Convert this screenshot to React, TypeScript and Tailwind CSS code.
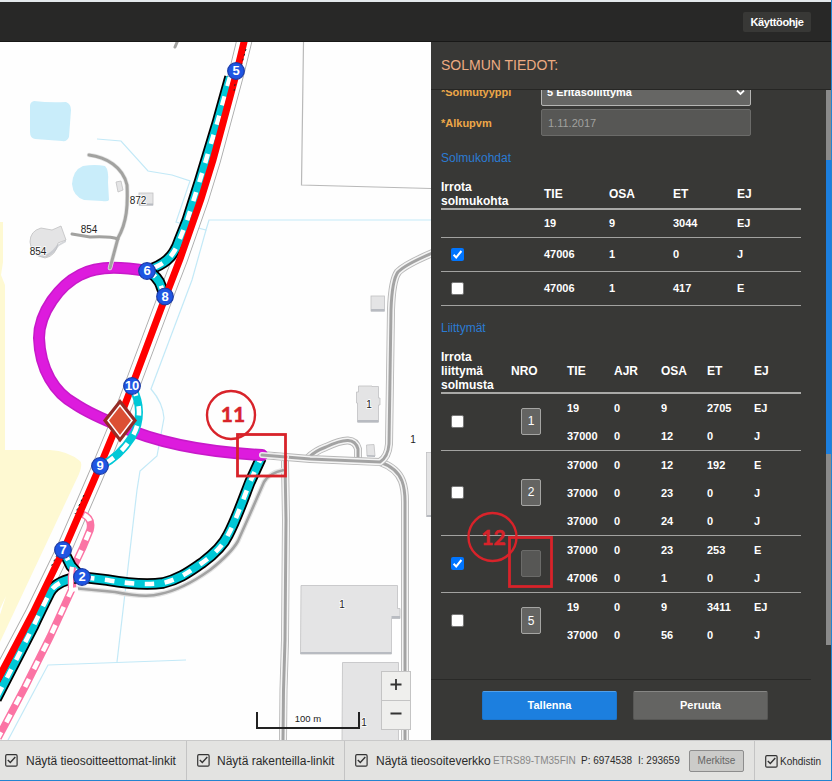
import React from 'react';

const SANS = "font-['Liberation_Sans',Arial,sans-serif]";

function Check({ checked }: { checked?: boolean }) {
  return (
    <span
      className={`block h-[13px] w-[13px] rounded-[2px] ${checked ? 'bg-[#0075ff]' : 'border border-[#767676] bg-white'}`}
    >
      {checked && (
        <svg viewBox="0 0 13 13" className="h-[13px] w-[13px]">
          <path d="M2.6 6.8 5.2 9.4 10.4 3" fill="none" stroke="#fff" strokeWidth="2" />
        </svg>
      )}
    </span>
  );
}

function FooterCheck() {
  return (
    <svg viewBox="0 0 13 13" className="h-[13px] w-[13px] shrink-0">
      <rect x="0.7" y="0.7" width="11.4" height="11.4" rx="1.2" fill="none" stroke="#333" strokeWidth="1.2" />
      <path d="M2.8 6 5.3 8.5 10.3 3" fill="none" stroke="#333" strokeWidth="1.4" />
    </svg>
  );
}

const RED =
  'M244.500 40 L237 71 L223 123 L213 160 L201 199 L180 259 L165 298 L132 386 L119 420 L100 466 L94 480 L65 547 L33 613 L-3 681';
const RAMP_NORTH = 'M230 77 L217.500 122 L200 180 L187 221 L179 241 Q175 253 167 260 Q160 266 148 270';
const RAMP_6_8 = 'M148 271 Q158 277 161 286 L165 297';
const RAMP_10_9 = 'M132 386 Q139 400 139 412 Q139 426 132 437 Q120 456 101 466';
const RAMP_EAST =
  'M81 577 L107 580 C130 584 148 585 163 583 C180 579 190 571 202 563 C214 554 223 546 228 535 C236 520 243 500 250 482 L261 458';
const RAMP_SOUTH = 'M81 577 Q57 580 50 592 C46 600 40 612 33 627 L-4 699';
const RAMP_7 = 'M63 550 L71 566 L81 577';
const MAGENTA =
  'M147 271 C128 268 100 264 80 275 C60 285 39 312 39 338 C40 370 55 393 75 404 C90 414 105 420 120 426 C155 442 205 452 262 455';
const PINK = 'M82 514 Q93 518 90 530 L83 547 L75 564 L72 589 L50 637 L25 687 L-2 738';
const MAIN_ROAD =
  'M262 455 L310 459 L380 462 Q388 457 389 444 L391 310 Q392 280 398 272 Q406 264 435 252';
const SOUTH_ROAD = 'M380 462 Q397 468 402 481 Q405 489 405 502 L405 740';
const LOOP = 'M308 458 Q315 451 326 447 C345 438 355 438 358 449 L358 461';
const MID_ROAD = 'M285 461 L286 520 L285 640 Q283 690 283 740';
const SIDE_ROAD =
  'M73 588 L115 592 C135 596 150 597 160 594 C180 590 196 580 210 570 C224 559 233 550 238 541 L250 514 L264 482 Q269 473 284 470';

function CasedRoad({ d }: { d: string }) {
  return (
    <g fill="none">
      <path d={d} stroke="#b8b8b8" strokeWidth="8" />
      <path d={d} stroke="#f4f4f4" strokeWidth="6.2" />
      <path d={d} stroke="#a3a3a3" strokeWidth="3" />
    </g>
  );
}

function Ramp({ d, outline = true, offset = 0 }: { d: string; outline?: boolean; offset?: number }) {
  return (
    <g fill="none">
      {outline && <path d={d} stroke="#000" strokeWidth="11.5" />}
      <path d={d} stroke="#00c8d7" strokeWidth="8" />
      <path d={d} stroke="#fff" strokeWidth="4.6" strokeDasharray="9.5 10.5" strokeDashoffset={offset} />
    </g>
  );
}

const MARKERS: [number, number, string][] = [
  [236, 71, '5'],
  [147, 271, '6'],
  [165, 296.5, '8'],
  [132, 386, '10'],
  [100, 466, '9'],
  [63, 550, '7'],
  [82, 577, '2'],
];

const LABELS: [number, number, string][] = [
  [138, 204, '872'],
  [89, 233, '854'],
  [38, 255, '854'],
  [369, 408, '1'],
  [413, 443, '1'],
  [342, 608, '1'],
  [364, 726, '1'],
];

function MapView() {
  return (
    <svg viewBox="0 42 431 698" className={`block h-[698px] w-[431px] shrink-0 bg-[#fefefe] ${SANS}`}>
      <path d="M0 222 H3 V262 L1 275 L5 285 V450 H50 Q68 451 80 461 Q83 464 79 474 L0 642Z" fill="#fef9d2" />
      <path d="M6 596 L0 609 V620 L-1 618Z" fill="#fff" />
      <path d="M34 101 Q50 103 66 102 Q71 104 71 110 L69 137 Q67 142 62 141 L35 139 Q30 138 30 132 L30 106 Q30 102 34 101Z" fill="#c9edfa" />
      <path d="M83 166 Q95 164 105 166 Q109 170 108 182 L109 200 Q108 202 102 201 L84 200 Q73 196 72 184 Q73 170 83 166Z" fill="#c9edfa" />
      <g fill="none" stroke="#c3e9f7" strokeWidth="1.2">
        <path d="M97 139 L121 141 L148 171 L172 175 L190 181 L176 222 L206 230 L209 220 H431" />
        <path d="M206 230 L192 280 L151 389 Q163 403 164 418 L157 456 L140 471 L137 490 L117 662" />
        <path d="M186 660 L48 665 L7 742" />
      </g>
      <path d="M303.500 42 L301.500 185 L431 188.500" fill="none" stroke="#b9b9b9" strokeWidth="1.2" />

      <g fill="#e4e4e5" stroke="#c0c0c2" strokeWidth="0.8">
        <path d="M30 242 Q30 231 41 228 L52 230 L61 226 L66 240 L58 243 Q56 256 45 258 Q31 255 30 242Z" />
        <path d="M116 182 L121 181 L123 190 L118 192Z" />
        <rect x="139" y="193" width="14" height="12" />
        <rect x="371" y="296" width="13.500" height="15" />
        <path d="M358.500 386 H372 V386.500 H378.500 V398 H380 V405 H378.500 V422 H357.500 V403 H356.500 V392 H358.500Z" />
        <path d="M366.500 445 L374 444.500 L375 456 H367Z" />
        <path d="M301 585.500 H397.500 V608.500 H400 V618.500 H391.500 V654 H300.500Z" />
        <path d="M342.500 662.500 H398.500 V741 H342Z" />
        <rect x="426.500" y="452.500" width="6" height="64" />
      </g>
      <g fill="#b8bbc1">
        <path d="M300.500 652 H391.500 V654 H300.500Z M391.500 616 H400 V618.500 H391.500Z M371 309 H384.500 V311.500 H371Z M357.500 420 H378.500 V422.500 H357.500Z M427 515 H431 V517 H427Z M367 455 L375 455.500 V457 L367 456.500Z M139 203.500 H153 V205.500 H139Z" />
        <path d="M34 253 Q45 261 57 245 L66 240 V242 L59 246 Q47 264 34 254Z" opacity="0.6" />
      </g>

      <CasedRoad d={SOUTH_ROAD} />
      <CasedRoad d={MID_ROAD} />
      <CasedRoad d={LOOP} />
      <CasedRoad d={MAIN_ROAD} />
      <g fill="none">
        <path d={SIDE_ROAD} stroke="#e4e4e4" strokeWidth="5" />
        <path d={SIDE_ROAD} stroke="#a3a3a3" strokeWidth="2.600" />
        <path d={RED} stroke="#ababab" strokeWidth="16" />
        <path d={RED} stroke="#fff" strokeWidth="14.200" />
      </g>

      <g fill="none">
        <path d={PINK} stroke="#fb74a4" strokeWidth="7.500" />
        <path d={PINK} stroke="#fff" strokeWidth="4.600" strokeDasharray="9 11" strokeDashoffset="-2" />
      </g>

      <Ramp d={RAMP_NORTH} />
      <Ramp d={RAMP_6_8} />
      <Ramp d={RAMP_EAST} offset={-4} />
      <Ramp d={RAMP_SOUTH} offset={-2} />
      <Ramp d={RAMP_7} offset={-2} />
      <path d="M73 567 L71 577 L71 588" fill="none" stroke="#fb74a4" strokeWidth="6.500" />
      <path d="M72 567 L71 577 L71 590 L78 589" fill="none" stroke="#fff" strokeWidth="4" />
      <g fill="none" strokeLinecap="round">
        <path d={MAGENTA} stroke="#c71ac9" strokeWidth="12" />
        <path d={MAGENTA} stroke="#dd1bdd" strokeWidth="9" />
      </g>
      <path d={RED} fill="none" stroke="#ff0000" strokeWidth="7" />
      <path d="M246 49 L240 70 M235 84 L234 92 M84 495 L75 514 M57 555 L51 567" fill="none" stroke="#222" strokeWidth="1" strokeDasharray="2 3" />
      <Ramp d={RAMP_10_9} outline={false} offset={-1} />

      <g fill="none" strokeLinecap="round">
        <path d="M89 155 C106 157 123 167 127 185 C128 205 127 222 118 238 L110 268" stroke="#e5e5e5" strokeWidth="4.500" />
        <path d="M89 155 C106 157 123 167 127 185 C128 205 127 222 118 238 L110 268" stroke="#a2a2a0" strokeWidth="3" />
        <path d="M72 234 L90 237 Q110 236 118 239" stroke="#a2a2a0" strokeWidth="3" />
        <path d="M178 40 L175 47" stroke="#a2a2a0" strokeWidth="3" />
        <path d="M262 455 L286 457" stroke="#ececec" strokeWidth="6" />
        <path d="M262 455 L286 457" stroke="#a3a3a3" strokeWidth="3" />
      </g>

      <path d="M120 401.500 L135 420.500 L120 440 L105 420.500Z" fill="#fff" stroke="#962c26" strokeWidth="3.200" />
      <path d="M120 406.500 L131 420.500 L120 435 L109 420.500Z" fill="#dc5034" />

      {MARKERS.map(([x, y, n]) => (
        <g key={n}>
          <circle cx={x} cy={y} r="8.300" fill="#1f56e3" stroke="#1b3ba8" strokeWidth="1.200" />
          <text x={x} y={y + 4.300} textAnchor="middle" fill="#fff" className="text-[13px] font-bold tracking-[-0.3px]">
            {n}
          </text>
        </g>
      ))}

      {LABELS.map(([x, y, s]) => (
        <text key={`${x}-${y}`} x={x} y={y} textAnchor="middle" fill="#222" stroke="#fff" strokeWidth="1.500" paintOrder="stroke" className="text-[10px]">
          {s}
        </text>
      ))}

      <g fill="#efefed" stroke="#c4c4c4">
        <rect x="381.500" y="671.500" width="29" height="29" />
        <rect x="381.500" y="700.500" width="29" height="29" />
      </g>
      <path d="M390.500 684.500 H401.500 M396 679 V690 M390.500 713.500 H401.500" stroke="#333" strokeWidth="1.800" />
      <path d="M257 712 V728 H359 V712" fill="none" stroke="#222" strokeWidth="2" />
      <text x="308" y="722" textAnchor="middle" fill="#222" className="text-[9.500px]">
        100 m
      </text>
    </svg>
  );
}

const NODE_POINTS = [
  { state: 'none', cells: ['19', '9', '3044', 'EJ'], h: 'h-[28px]' },
  { state: 'on', cells: ['47006', '1', '0', 'J'], h: 'h-[34px]' },
  { state: 'off', cells: ['47006', '1', '417', 'E'], h: 'h-[34px]' },
];

const JUNCTIONS = [
  { on: false, nro: '1', h: 'h-[57px]', rows: [['19', '0', '9', '2705', 'EJ'], ['37000', '0', '12', '0', 'J']] },
  {
    on: false,
    nro: '2',
    h: 'h-[85px]',
    rows: [['37000', '0', '12', '192', 'E'], ['37000', '0', '23', '0', 'J'], ['37000', '0', '24', '0', 'J']],
  },
  { on: true, nro: '', h: 'h-[57px]', rows: [['37000', '0', '23', '253', 'E'], ['47006', '0', '1', '0', 'J']] },
  { on: false, nro: '5', h: 'h-[57px]', rows: [['19', '0', '9', '3411', 'EJ'], ['37000', '0', '56', '0', 'J']] },
];

const GRID_POINTS = 'grid grid-cols-[103px_65px_64px_64px_1fr]';
const GRID_JUNCTION = 'grid grid-cols-[47px_47px_46px_47px_1fr]';

function Panel() {
  return (
    <aside className="flex w-[400px] flex-col bg-[#383836] text-white">
      <h1 className="flex h-[48px] shrink-0 items-center border-b border-[#262624] pl-[10px] text-[14px] text-[#ecab82]">
        SOLMUN TIEDOT:
      </h1>
      <div className="flex h-[590px] shrink-0 justify-between overflow-hidden">
        <div className="w-[360px] pl-[10px] box-content">
          <div className="flex h-[16px] items-end overflow-hidden">
            <span className="h-[21px] w-[100px] text-[11px] font-bold leading-[14px] text-[#eda748]">*Solmutyyppi</span>
            <div className="flex h-[27px] w-[210px] items-start justify-between rounded-[2px] border border-[#b5b5b3] bg-[#666664] pl-[5px] pr-[5px] pt-[5px] text-[11px] font-bold leading-[14px]">
              <span>5 Eritasoliittymä</span>
              <svg viewBox="0 0 8 8" className="mt-[4px] h-[8px] w-[9px]">
                <path d="M0.500 1.500 4 5 7.500 1.500" fill="none" stroke="#fff" strokeWidth="1.800" />
              </svg>
            </div>
          </div>
          <div className="mt-[3px] flex h-[27px] items-center">
            <span className="w-[100px] pt-[2px] text-[11px] font-bold text-[#eda748]">*Alkupvm</span>
            <div className="flex h-[27px] w-[210px] items-center rounded-[2px] border border-[#6b6b69] bg-[#575755] pl-[6px] pt-px text-[11px] text-[#a1a19f]">
              1.11.2017
            </div>
          </div>
          <h2 className="mt-[14px] text-[12px] leading-[16px] text-[#2b7bd3]">Solmukohdat</h2>
          <div className={`${GRID_POINTS} mt-[14px] h-[30px] items-center border-b-2 border-[#a9a9a7] text-[12px] font-bold`}>
            <span className="leading-[14px]">
              Irrota
              <br />
              solmukohta
            </span>
            <span>TIE</span>
            <span>OSA</span>
            <span>ET</span>
            <span>EJ</span>
          </div>
          {NODE_POINTS.map((row, i) => (
            <div key={i} className={`${GRID_POINTS} ${row.h} items-center border-b border-[#a2a2a0] text-[11px] font-bold`}>
              <span className="pl-[10px]">{row.state !== 'none' && <Check checked={row.state === 'on'} />}</span>
              {row.cells.map((c, j) => (
                <span key={j}>{c}</span>
              ))}
            </div>
          ))}
          <h2 className="mt-[14px] text-[12px] leading-[16px] text-[#2b7bd3]">Liittymät</h2>
          <div className="mt-[14px] flex h-[44px] items-center border-b-2 border-[#a9a9a7] text-[12px] font-bold">
            <span className="w-[70px] leading-[14px]">
              Irrota
              <br />
              liittymä
              <br />
              solmusta
            </span>
            <span className="w-[56px]">NRO</span>
            <div className={`${GRID_JUNCTION} flex-1`}>
              <span>TIE</span>
              <span>AJR</span>
              <span>OSA</span>
              <span>ET</span>
              <span>EJ</span>
            </div>
          </div>
          {JUNCTIONS.map((j, i) => (
            <div
              key={i}
              className={`flex ${j.h} items-center text-[11px] font-bold ${i < JUNCTIONS.length - 1 ? 'border-b border-[#a2a2a0]' : ''}`}
            >
              <div className="w-[80px] pb-[2px] pl-[10px]">
                <Check checked={j.on} />
              </div>
              <div className="w-[46px] pb-[2px]">
                <div
                  className={`flex h-[27px] w-[20px] items-center justify-center rounded-[2px] border text-[12px] font-normal ${
                    j.nro ? 'border-[#a5a5a3] bg-[#646462]' : 'border-[#6b6b69] bg-[#575755]'
                  }`}
                >
                  {j.nro}
                </div>
              </div>
              <div className="flex-1">
                {j.rows.map((r, k) => (
                  <div key={k} className={`${GRID_JUNCTION} h-[28px] items-center`}>
                    {r.map((c, m) => (
                      <span key={m}>{c}</span>
                    ))}
                  </div>
                ))}
              </div>
            </div>
          ))}
        </div>
        <div className="flex w-[5px] flex-col">
          <div className="h-[70px] bg-[#8b8b8b]" />
          <div className="h-[294px] bg-[#1c7fdf]" />
          <div className="h-[191px] bg-[#8b8b8b]" />
        </div>
      </div>
      <div className="mr-[20px] -mt-px flex flex-1 gap-[16px] border-t border-[#292927] pl-[51px] pt-[11px] text-[11px] font-bold">
        <button className="h-[29px] w-[135px] rounded-[2px] border border-[#1b76cf] border-t-[#52a0ea] bg-[#1c7fdf]">
          Tallenna
        </button>
        <button className="h-[29px] w-[135px] rounded-[2px] border border-[#575755] border-t-[#868684] bg-[#646462]">
          Peruuta
        </button>
      </div>
    </aside>
  );
}

function Footer() {
  return (
    <footer className="flex h-[41px] border-b border-t border-b-[#2384d0] border-t-[#c9c9c9] bg-[#e3e3e1] text-[12px] text-[#2b2b2b] whitespace-nowrap">
      <label className="flex w-[187px] shrink-0 items-center gap-[8px] border-r border-[#c4c4c4] pl-[5px]">
        <FooterCheck />
        <span className="tracking-[-0.03px]">Näytä tieosoitteettomat-linkit</span>
      </label>
      <label className="flex w-[158px] shrink-0 items-center gap-[7px] border-r border-[#c4c4c4] pl-[10px]">
        <FooterCheck />
        <span>Näytä rakenteilla-linkit</span>
      </label>
      <label className="flex w-[148px] shrink-0 items-center gap-[8px] pl-[10px]">
        <FooterCheck />
        <span>Näytä tieosoiteverkko</span>
      </label>
      <div className="flex w-[262px] shrink-0 items-center border-r border-[#c4c4c4] text-[10px]">
        <span className="w-[88px] text-[#888]">ETRS89-TM35FIN</span>
        <span className="w-[57px]">P: 6974538</span>
        <span className="w-[51px]">I: 293659</span>
        <button className="h-[22px] w-[55px] rounded-[2px] border border-[#8d8d8d] bg-[#cbcbc9] text-[#666]">Merkitse</button>
      </div>
      <label className="flex items-center gap-[2px] pl-[10px] pt-[2px] text-[10px]">
        <FooterCheck />
        <span>Kohdistin</span>
      </label>
    </footer>
  );
}

export default function App() {
  return (
    <div className={`relative h-[781px] w-[832px] overflow-hidden bg-[#383836] ${SANS}`}>
      <div className="flex h-full w-full flex-col border-r border-[#2384d0]">
        <header className="flex h-[42px] shrink-0 items-center justify-end border-b border-t-2 border-b-[#181817] border-t-[#e3e9eb] bg-[#282827] pr-[20px] pt-px">
          <button className="h-[20px] w-[68px] rounded-[2px] bg-[#383836] text-[11px] font-bold tracking-[-0.4px] text-white">Käyttöohje</button>
        </header>
        <main className="flex h-[698px] shrink-0">
          <MapView />
          <Panel />
        </main>
        <Footer />
      </div>
      <svg viewBox="0 0 832 781" className="pointer-events-none absolute inset-0 h-[781px] w-[832px] font-['Lato',sans-serif]">
        <g fill="none" stroke="#d8232a" strokeWidth="2.800">
          <circle cx="231" cy="415" r="24" strokeWidth="2.400" />
          <rect x="237.500" y="434.500" width="48" height="41.500" />
          <circle cx="492.500" cy="537" r="24" strokeWidth="2.400" />
          <rect x="509.500" y="537.500" width="42" height="49" />
        </g>
        <g fill="#d8232a" stroke="#d8232a" strokeWidth="0.500" textAnchor="middle" className="text-[21px] font-bold">
          <text x="233" y="421.500">11</text>
          <text x="493.500" y="545">12</text>
        </g>
      </svg>
    </div>
  );
}
